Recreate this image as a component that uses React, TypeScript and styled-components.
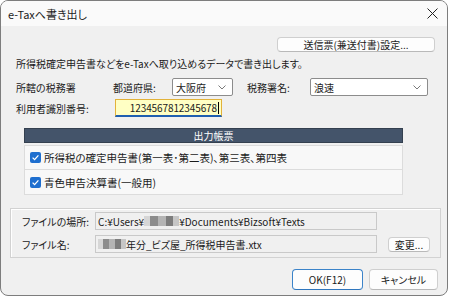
import React from 'react';
import styled, { createGlobalStyle } from 'styled-components';

const GlobalStyle = createGlobalStyle`
  html, body {
    margin: 0;
    padding: 0;
    background: #ffffff;
  }
  body {
    font-family: "Noto Sans CJK JP", "Noto Sans", sans-serif;
    font-size: 10px;
    color: #1b1b1b;
    font-feature-settings: "palt";
  }
`;

const Chevron = () => (
  <svg width="8" height="5" viewBox="0 0 8 5">
    <path d="M0.5 0.5 L4 4 L7.5 0.5" fill="none" stroke="#7a7a7a" strokeWidth="1" />
  </svg>
);

const Check = () => (
  <svg width="9" height="9" viewBox="0 0 9 9">
    <path d="M1.6 4.6 L3.6 6.6 L7.4 2.4" fill="none" stroke="#fff" strokeWidth="1.3" />
  </svg>
);

const CloseIcon = () => (
  <svg width="11" height="11" viewBox="0 0 11 11">
    <path d="M0.5 0.5 L10.5 10.5 M10.5 0.5 L0.5 10.5" stroke="#222" strokeWidth="1" />
  </svg>
);

const App = () => {
  return (
    <>
      <GlobalStyle />
      <Window>
        <TitleBar>
          <TitleText>e-Taxへ書き出し</TitleText>
          <CloseIcon />
        </TitleBar>
        <Body>
          <TopBar>
            <Button $w={158} $h={15}>送信票(兼送付書)設定...</Button>
          </TopBar>
          <Desc>所得税確定申告書などをe-Taxへ取り込めるデータで書き出します。</Desc>
          <FormRow>
            <Label $w={97}>所轄の税務署</Label>
            <Label $w={59}>都道府県:</Label>
            <Select $w={61}>
              <span>大阪府</span>
              <Chevron />
            </Select>
            <Label $w={63} style={{ marginLeft: 14 }}>税務署名:</Label>
            <Select $w={118}>
              <span>浪速</span>
              <Chevron />
            </Select>
          </FormRow>
          <FormRow $top={3}>
            <Label $w={99}>利用者識別番号:</Label>
            <IdInput>
              1234567812345678<Caret />
            </IdInput>
          </FormRow>
          <Table>
            <TableHead>出力帳票</TableHead>
            <TableRow>
              <CheckBox><Check /></CheckBox>
              所得税の確定申告書(第一表･第二表)、第三表、第四表
            </TableRow>
            <TableRow>
              <CheckBox><Check /></CheckBox>
              青色申告決算書(一般用)
            </TableRow>
          </Table>
          <Group>
            <GroupRow>
              <Label $w={73}>ファイルの場所:</Label>
              <PathBox>
                C:¥Users¥<Blur $w={35} />¥Documents¥Bizsoft¥Texts
              </PathBox>
            </GroupRow>
            <GroupRow>
              <Label $w={73}>ファイル名:</Label>
              <PathBox>
                <Blur $w={28} />年分_ビズ屋_所得税申告書.xtx
              </PathBox>
              <Button $w={42} $h={15} style={{ marginLeft: 11 }}>変更...</Button>
            </GroupRow>
          </Group>
          <Footer>
            <Button $w={71} $h={21} $primary>OK(F12)</Button>
            <Button $w={69} $h={21}>キャンセル</Button>
          </Footer>
        </Body>
      </Window>
    </>
  );
};

export default App;

const Window = styled.div`
  width: 448px;
  height: 296px;
  box-sizing: border-box;
  border: 1px solid #7d7d7d;
  border-radius: 8px;
  background: #f0f0f0;
  overflow: hidden;
  display: flex;
  flex-direction: column;
`;

const TitleBar = styled.div`
  height: 25px;
  flex-shrink: 0;
  background: #fafafa;
  display: flex;
  align-items: center;
  justify-content: space-between;
  padding: 0 9px 0 7px;
`;

const TitleText = styled.div`
  font-size: 11px;
  color: #1a1a1a;
`;

const Body = styled.div`
  display: flex;
  flex-direction: column;
`;

const TopBar = styled.div`
  display: flex;
  justify-content: flex-end;
  padding-right: 12px;
  margin-top: 11px;
`;

const Button = styled.div<{ $w: number; $h: number; $primary?: boolean }>`
  width: ${({ $w }) => $w}px;
  height: ${({ $h }) => $h}px;
  box-sizing: border-box;
  display: flex;
  align-items: center;
  justify-content: center;
  background: #fdfdfd;
  border: 1px solid ${({ $primary }) => ($primary ? '#3b83c9' : '#cfcfcf')};
  border-bottom-color: ${({ $primary }) => ($primary ? '#2f76bd' : '#b9b9b9')};
  border-radius: 4px;
  font-size: 10px;
  color: #1a1a1a;
  white-space: nowrap;
`;

const Desc = styled.div`
  margin-top: 5px;
  padding-left: 15px;
  line-height: 14px;
  white-space: nowrap;
`;

const FormRow = styled.div<{ $top?: number }>`
  display: flex;
  align-items: center;
  height: 18px;
  margin-top: ${({ $top }) => $top ?? 7}px;
  padding-left: 15px;
`;

const Label = styled.div<{ $w: number }>`
  width: ${({ $w }) => $w}px;
  flex-shrink: 0;
  white-space: nowrap;
`;

const Select = styled.div<{ $w: number }>`
  width: ${({ $w }) => $w}px;
  height: 18px;
  box-sizing: border-box;
  display: flex;
  align-items: center;
  justify-content: space-between;
  padding: 0 6px 0 3px;
  background: #ffffff;
  border: 1px solid #8c8c8c;
  border-radius: 2px;
`;

const IdInput = styled.div`
  width: 107px;
  height: 18px;
  box-sizing: border-box;
  display: flex;
  align-items: center;
  justify-content: flex-end;
  padding-right: 2px;
  background: #ffffc4;
  border: 1px solid #e2b23a;
  border-bottom: 2px solid #1f5fb0;
  letter-spacing: -0.1px;
`;

const Caret = styled.span`
  display: inline-block;
  width: 1px;
  height: 12px;
  background: #000;
  margin-left: 1px;
`;

const Table = styled.div`
  margin: 11px 0 0 23px;
  width: 379px;
  display: flex;
  flex-direction: column;
`;

const TableHead = styled.div`
  height: 15px;
  box-sizing: border-box;
  background: #44546a;
  border: 1px solid #34404f;
  color: #ffffff;
  display: flex;
  align-items: center;
  justify-content: center;
  margin-bottom: 2px;
`;

const TableRow = styled.div`
  height: 25px;
  box-sizing: border-box;
  display: flex;
  align-items: center;
  padding-left: 5px;
  gap: 3px;
  background: #f8f8f8;
  border: 1px solid #dcdcdc;
  border-top: none;
  font-size: 10.5px;
  white-space: nowrap;
  &:nth-child(2) {
    border-top: 1px solid #dcdcdc;
  }
`;

const CheckBox = styled.span`
  width: 11px;
  height: 11px;
  border-radius: 2px;
  background: #1f6fcf;
  display: inline-flex;
  align-items: center;
  justify-content: center;
`;

const Group = styled.div`
  margin: 13px 0 0 9px;
  width: 431px;
  height: 50px;
  box-sizing: border-box;
  border: 1px solid #d2d2d2;
  box-shadow: inset 1px 1px 0 #ffffff;
  padding: 3px 0 0 11px;
  display: flex;
  flex-direction: column;
  gap: 5px;
`;

const GroupRow = styled.div`
  display: flex;
  align-items: center;
  height: 18px;
`;

const PathBox = styled.div`
  width: 282px;
  height: 18px;
  box-sizing: border-box;
  display: flex;
  align-items: center;
  padding-left: 2px;
  background: #f0f0f0;
  border: 1px solid #c9c9c9;
  white-space: nowrap;
  overflow: hidden;
`;

const Blur = styled.span<{ $w: number }>`
  display: inline-block;
  width: ${({ $w }) => $w}px;
  height: 10px;
  background: linear-gradient(90deg, #d6d6d6 0 18%, #8c8c8c 18% 40%, #b4b4b4 40% 62%, #7d7d7d 62% 82%, #c6c6c6 82%);
`;

const Footer = styled.div`
  display: flex;
  justify-content: flex-end;
  gap: 6px;
  margin-top: 11px;
  padding-right: 9px;
`;
